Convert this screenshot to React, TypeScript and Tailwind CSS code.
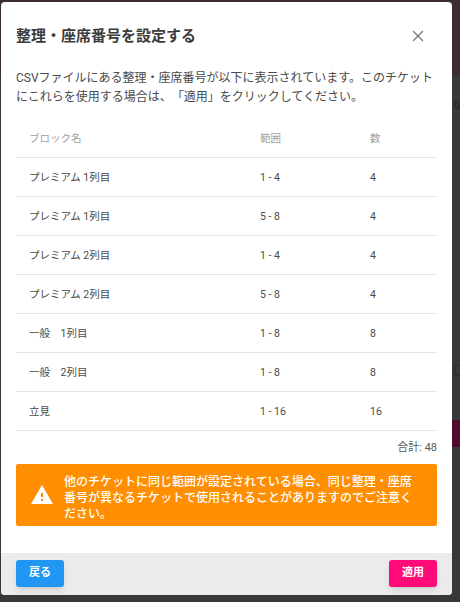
import { X } from 'lucide-react'

const rows = [
  { name: 'プレミアム 1列目', range: '1 - 4', count: '4' },
  { name: 'プレミアム 1列目', range: '5 - 8', count: '4' },
  { name: 'プレミアム 2列目', range: '1 - 4', count: '4' },
  { name: 'プレミアム 2列目', range: '5 - 8', count: '4' },
  { name: '一般　1列目', range: '1 - 8', count: '8' },
  { name: '一般　2列目', range: '1 - 8', count: '8' },
  { name: '立見', range: '1 - 16', count: '16' },
]

export default function App() {
  return (
    <div className="relative h-[602px] w-[460px] overflow-hidden bg-[#383838] font-['Roboto','Noto_Sans_CJK_JP',sans-serif] [text-spacing-trim:space-all]">
      {/* page behind the overlay */}
      <div className="h-[75px] bg-[#3d2c33]" />
      <div className="absolute top-[420px] right-0 h-[27px] w-[8px] bg-[#4f0a2c]" />
      <div className="absolute top-[362px] left-[453px] text-[16px] leading-[18px] text-[#20303a]">C</div>
      <div className="absolute top-[100px] left-[454px] text-[10px] leading-[12px] text-[#222222]">0</div>

      <div className="absolute top-[2px] left-[1px] flex h-[593px] w-[451px] flex-col overflow-hidden rounded bg-white">
        <div className="flex items-center justify-between pt-[23px] pr-[25px] pl-[15px]">
          <h2 className="pt-[1px] text-[15px] leading-[20px] font-bold text-[#3c3c3c]">整理・座席番号を設定する</h2>
          <X className="h-[18px] w-[18px] text-[#757575]" strokeWidth={1.75} />
        </div>

        <p className="mt-[23px] px-[15px] text-[12px] leading-[19px] text-[#4a4a4a]">
          CSVファイルにある整理・座席番号が以下に表示されています。このチケットにこれらを使用する場合は、「適用」をクリックしてください。
        </p>

        <div className="mt-[12px] px-[15px]">
          <div className="flex h-[39px] items-center border-b border-[#e4e4e4] pt-[2px] pl-[13px] text-[10.5px] text-[#a0a0a0]">
            <div className="w-[231px]">ブロック名</div>
            <div className="w-[110px]">範囲</div>
            <div>数</div>
          </div>
          {rows.map((row, i) => (
            <div key={i} className="flex h-[39px] items-center border-b border-[#e4e4e4] pt-[2px] pl-[13px] text-[10.5px] text-[#4a4a4a]">
              <div className="w-[231px]">{row.name}</div>
              <div className="w-[110px]">{row.range}</div>
              <div>{row.count}</div>
            </div>
          ))}
        </div>

        <div className="mt-[9px] px-[15px] text-right text-[11px] leading-[15px] text-[#5a5a5a]">合計: 48</div>

        <div className="mx-[15px] mt-[9px] flex h-[62px] items-center gap-[10px] rounded-[2px] bg-[#ff8f00] pr-[20px] pl-[14px] text-white">
          <svg viewBox="0 0 24 24" className="h-[24px] w-[24px] shrink-0" fill="currentColor">
            <path d="M1 21h22L12 2 1 21zm12-3h-2v-2h2v2zm0-4h-2v-4h2v4z" />
          </svg>
          <p className="pt-[5px] text-[12px] leading-[16px] font-medium">
            他のチケットに同じ範囲が設定されている場合、同じ整理・座席番号が異なるチケットで使用されることがありますのでご注意ください。
          </p>
        </div>

        <div className="mt-auto flex h-[42px] items-start justify-between bg-[#ebebeb] px-[15px] pt-[7px]">
          <button className="h-[27px] w-[48px] rounded-[3px] bg-[#2196f3] text-[11px] font-bold text-white shadow-md">戻る</button>
          <button className="h-[27px] w-[48px] rounded-[3px] bg-[#ff0a78] text-[11px] font-bold text-white shadow-md">適用</button>
        </div>
      </div>
    </div>
  )
}
